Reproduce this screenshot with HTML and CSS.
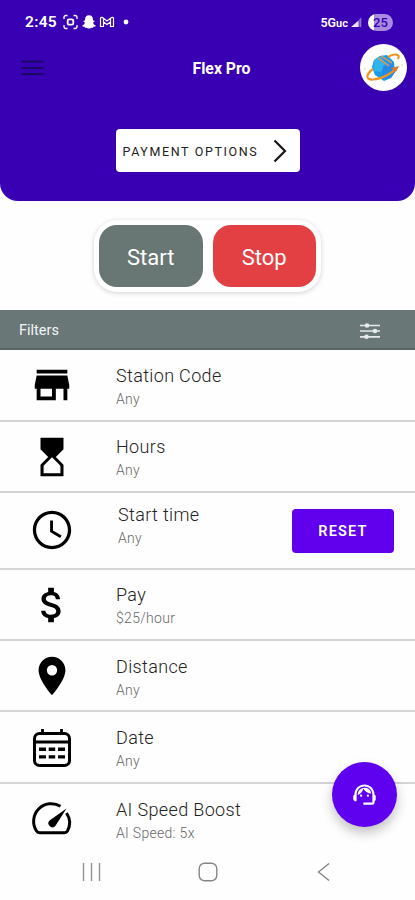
FILE: index.html
```html
<!DOCTYPE html>
<html lang="en">
<head>
<meta charset="utf-8">
<title>Flex Pro</title>
<link rel="stylesheet" href="styles.css">
</head>
<body>
<div class="app">
  <header class="header">
    <div class="status">
      <span class="time">2:45</span>
      <svg class="st-icons" width="68" height="16" viewBox="0 0 68 16">
        <g fill="none" stroke="#fff" stroke-width="1.3">
          <path d="M1 5V3.5Q1 1.5 3 1.5H4.500M10.500 1.500H12Q14 1.500 14 3.500V5M14 11V12.500Q14 14.500 12 14.500H10.500M4.500 14.500H3Q1 14.500 1 12.500V11"/>
          <rect x="4.700" y="5.300" width="5.600" height="5.400" rx="1.500" stroke-width="1.800"/>
        </g>
        <path fill="#fff" d="M26 1.300c-2.700 0-4 1.900-4 4.100v1.100l-1.600.3.200 1 1.400.7c-.4 1.500-1.500 2.500-2.700 3l.2.900 2 .4.500 1 1.700-.1c.8.600 1.400.9 2.300.9s1.500-.3 2.300-.9l1.700.1.500-1 2-.4.200-.9c-1.200-.5-2.300-1.500-2.700-3l1.400-.7.200-1-1.600-.3V5.400c0-2.200-1.300-4.100-4-4.100z"/>
        <path fill="none" stroke="#fff" stroke-width="1.200" d="M37.500 12.500V4.300Q38 2.800 39.500 3.600L44 7 48.500 3.600Q50 2.800 50.500 4.300V12.500H47.500V8L44 10.600 40.500 8V12.500ZM40.500 8V4.500M47.500 8V4.500"/>
        <circle cx="63" cy="8" r="2.400" fill="#fff"/>
      </svg>
      <span class="spacer"></span>
      <span class="network">5G<small>uc</small></span>
      <svg class="signal" width="11" height="11" viewBox="0 0 11 11"><path fill="#fff" fill-opacity=".9" d="M0 10 7.600 3.500V10z"/><path fill="#fff" fill-opacity=".45" d="M8.300 10V2.200L10.300.500V10z"/></svg>
      <span class="battery">25</span>
    </div>
    <div class="bar">
      <svg class="menu" width="22" height="16" viewBox="0 0 22 16"><path d="M0 1.500H21.500M0 8H21.500M0 14H21.500" stroke="#1d0764" stroke-width="2"/></svg>
      <h1>Flex Pro</h1>
      <div class="avatar">
        <svg width="47" height="47" viewBox="0 0 47 47">
          <path d="M14 16 20 12 27 11 34 18 35 28 31 34 24 37 15 31 12 23z" fill="#159be9"/>
          <path d="M14 16 20 12 26 20 21 28 13 27z" fill="#2fb4ee"/>
          <path d="M23 22 32 18 35 28 31 34 22 35z" fill="#2689e4"/>
          <path d="M18 14 29 22M21 12 32 19" fill="none" stroke="#c69a65" stroke-width="1.800"/>
          <path d="M28 13C34 9 41 10 38 15M13 25C6 30 5 36 13 35.500 22 35 32 29 37 24" fill="none" stroke="#ee941f" stroke-width="2.200"/>
          <path d="M31 24 39 22 36 28z" fill="#d87b2d"/>
          <circle cx="5" cy="25" r="1.300" fill="#f5edc9"/><circle cx="42" cy="21" r="1.200" fill="#f5edc9"/>
        </svg>
      </div>
    </div>
    <button class="payment"><span>PAYMENT OPTIONS</span><svg width="14" height="24" viewBox="0 0 14 24"><path d="M1.500 1.500 12 12 1.500 22.500" fill="none" stroke="#161616" stroke-width="2.200"/></svg></button>
  </header>

  <section class="controls">
    <div class="switch"><button class="start">Start</button><button class="stop">Stop</button></div>
  </section>

  <div class="filters"><span>Filters</span>
    <svg width="22" height="18" viewBox="0 0 22 18"><path d="M1 3.500H21M1 9H21M1 14.800H21" stroke="#e6eaea" stroke-width="1.700"/><g fill="#e6eaea"><circle cx="8" cy="3.500" r="2.300"/><circle cx="16" cy="9" r="2.300"/><circle cx="7.500" cy="14.800" r="2.300"/></g></svg>
  </div>

  <main class="list">
    <div class="row store">
      <svg class="icon" viewBox="0 0 24 24"><path d="M20 4H4v2h16V4zm1 10v-2l-1-5H4l-1 5v2h1v6h10v-6h4v6h2v-6h1zm-9 4H6v-4h6v4z"/></svg>
      <div class="text"><h2>Station Code</h2><p>Any</p></div>
    </div>
    <div class="row hours">
      <svg class="icon" viewBox="0 0 24 24"><path d="M18 22l-.01-6L14 12l3.990-4.010L18 2H6v6l4 4-4 3.990V22h12zM7.600 16.500l4.400-4.400 4.400 4.400V20.500H7.600v-4z"/></svg>
      <div class="text"><h2>Hours</h2><p>Any</p></div>
    </div>
    <div class="row clock">
      <svg class="icon" viewBox="0 0 24 24"><path d="M11.990 2C6.470 2 2 6.480 2 12s4.470 10 9.990 10C17.520 22 22 17.520 22 12S17.520 2 11.990 2zM12 20.300c-4.580 0-8.300-3.720-8.300-8.300s3.720-8.300 8.300-8.300 8.300 3.720 8.300 8.300-3.720 8.300-8.300 8.300zm.5-13.300H11v6l5.250 3.150.75-1.230-4.500-2.670z"/></svg>
      <div class="text"><h2>Start time</h2><p>Any</p></div>
      <button class="reset">RESET</button>
    </div>
    <div class="row pay">
      <svg class="icon" viewBox="0 0 24 24"><path d="M11.800 10.900c-2.270-.59-3-1.200-3-2.150 0-1.090 1.010-1.850 2.700-1.850 1.780 0 2.440.85 2.500 2.100h2.210c-.07-1.720-1.120-3.300-3.210-3.810V3h-3v2.160c-1.940.42-3.500 1.680-3.500 3.610 0 2.310 1.910 3.460 4.700 4.130 2.500.6 3 1.480 3 2.410 0 .69-.49 1.790-2.700 1.790-2.060 0-2.870-.92-2.980-2.100h-2.200c.12 2.190 1.760 3.420 3.680 3.830V21h3v-2.150c1.950-.37 3.500-1.500 3.500-3.550 0-2.840-2.430-3.810-4.700-4.400z"/></svg>
      <div class="text"><h2>Pay</h2><p>$25/hour</p></div>
    </div>
    <div class="row distance">
      <svg class="icon" viewBox="0 0 24 24"><path d="M12 2C8.130 2 5 5.130 5 9c0 5.250 7 13 7 13s7-7.750 7-13c0-3.870-3.130-7-7-7zm0 9.700a2.700 2.700 0 1 1 0-5.400 2.700 2.700 0 0 1 0 5.400z"/></svg>
      <div class="text"><h2>Distance</h2><p>Any</p></div>
    </div>
    <div class="row date">
      <svg class="icon" viewBox="0 0 46 46"><rect x="5.500" y="8.500" width="35" height="32" rx="5" fill="none" stroke="#000" stroke-width="3"/><path d="M5 17H41M13.500 4V10M32.500 4V10" fill="none" stroke="#000" stroke-width="2.800"/><path d="M10 22.500h7v3.500h-7zM19.700 22.500h6.500v3.500h-6.500zM29 22.500h7v3.500h-7zM10 30.200h7v3.300h-7zM19.700 30.200h6.500v3.300h-6.500zM29 30.200h7v3.300h-7z"/></svg>
      <div class="text"><h2>Date</h2><p>Any</p></div>
    </div>
    <div class="row boost">
      <svg class="icon" viewBox="0 0 46 46"><path d="M31.500 10.200A17.700 17.700 0 0 0 7.500 35Q8.500 36.700 10.500 36.700H35.500Q37.500 36.700 38.500 35A17.700 17.700 0 0 0 37.500 17" fill="none" stroke="#000" stroke-width="3"/><path d="M37.500 12.500 26.500 29.800A3.800 3.800 0 0 1 20.500 24.500Z"/></svg>
      <div class="text"><h2>AI Speed Boost</h2><p>AI Speed: 5x</p></div>
    </div>
  </main>

  <nav class="nav">
    <svg width="20" height="20" viewBox="0 0 20 20"><path d="M1.500 1V19M9.500 1V19M17.500 1V19" stroke="#929292" stroke-width="1.400"/></svg>
    <svg width="20" height="20" viewBox="0 0 20 20"><rect x="1.200" y="1.200" width="17.600" height="17.600" rx="5.500" fill="none" stroke="#858585" stroke-width="1.400"/></svg>
    <svg width="20" height="20" viewBox="0 0 20 20"><path d="M16 1.500 5.500 10 16 18.500" fill="none" stroke="#858585" stroke-width="1.400"/></svg>
  </nav>

  <button class="fab" aria-label="Support">
    <svg width="27" height="27" viewBox="0 0 24 24" fill="#fff"><path d="M21 12.220C21 6.730 16.740 3 12 3c-4.690 0-9 3.650-9 9.280-.6.340-1 .98-1 1.720v2c0 1.100.9 2 2 2h1v-6.100c0-3.870 3.130-7 7-7s7 3.130 7 7V19h-8v2h8c1.100 0 2-.9 2-2v-1.220c.59-.31 1-.92 1-1.640v-2.300c0-.7-.41-1.310-1-1.620z"/><circle cx="9" cy="13" r="1"/><circle cx="15" cy="13" r="1"/><path d="M18 11.030A6.040 6.040 0 0 0 12.050 6c-3.030 0-6.290 2.510-6.030 6.450a8.075 8.075 0 0 0 4.860-5.890c1.310 2.630 4 4.440 7.120 4.470z"/></svg>
  </button>
</div>
</body>
</html>
```
FILE: styles.css
```css
* { box-sizing: border-box; }
body { margin: 0; background: #fefefe; font-family: Roboto, "Liberation Sans", sans-serif; }
button { border: 0; padding: 0; font-family: inherit; }
svg { display: block; flex: none; }
h1, h2, p { margin: 0; font-weight: 400; }

.app { position: relative; width: 415px; height: 900px; overflow: hidden; display: flex; flex-direction: column; }

.header { height: 201px; flex: none; background: #3900b3; border-radius: 0 0 18px 18px; display: flex; flex-direction: column; align-items: center; }
.status { width: 100%; height: 44px; padding: 0 22px 0 25px; display: flex; align-items: center; color: #fff; }
.time { width: 38px; font-size: 15.500px; font-weight: 600; letter-spacing: .3px; }
.spacer { flex: 1; }
.network { font-size: 12.500px; font-weight: 600; margin-right: 3px; }
.network small { font-size: 11px; }
.signal { margin-right: 6px; }
.battery { width: 25px; height: 17px; border-radius: 9px; background: linear-gradient(90deg, #fff 0 25%, #a98be0 25%); color: #3900b3; font-size: 13px; line-height: 17px; text-align: center; font-weight: 500; }
.bar { width: 100%; height: 47px; padding: 0 8px 0 22px; display: grid; grid-template-columns: 47px 1fr 47px; align-items: center; }
.bar h1 { text-align: center; color: #fff; font-size: 15.800px; font-weight: 700; padding: 2px 0 0 14px; }
.avatar { width: 47px; height: 47px; border-radius: 50%; background: #fff; }
.payment { margin-top: 38px; width: 184px; height: 43px; border-radius: 4px; background: #fff; display: flex; align-items: center; justify-content: space-between; padding: 0 13px 0 7px; color: #222; font-size: 12.500px; letter-spacing: 1.620px; white-space: nowrap; }
.payment span { padding-top: 1px; }

.controls { height: 109px; flex: none; display: flex; justify-content: center; padding-top: 19px; }
.switch { width: 227px; height: 72px; border-radius: 23px; background: #fff; box-shadow: 0 1px 5px rgba(0, 0, 0, .18); display: flex; gap: 10px; padding: 5px; }
.switch button { flex: 1; height: 62px; border-radius: 18px; color: #fff; font-size: 22px; padding-top: 2px; }
.start { background: #687674; }
.stop { background: #e34043; }

.filters { height: 40px; flex: none; background: #6a7777; border-bottom: 2px solid #5a6665; color: #f4f5f5; display: flex; align-items: center; justify-content: space-between; padding: 3px 34px 0 19px; font-size: 14.500px; }

.list { height: 494px; flex: none; }
.row { display: flex; align-items: flex-start; height: 71px; border-bottom: 2px solid #d3d3d3; padding: 12px 21px 0 29px; }
.icon { width: 46px; height: 46px; }
.text { margin-left: 41px; flex: 1; }
.row h2 { font-size: 18px; line-height: 24px; letter-spacing: .35px; color: #222; font-weight: 300; margin-top: 2px; }
.row p { font-size: 14px; line-height: 20px; color: #686868; font-weight: 300; letter-spacing: .3px; margin-top: 1px; }
.store { height: 72px; }
.hours .text { margin-top: -1px; }
.clock { height: 77px; padding-top: 14px; }
.clock .text { margin: -6px 0 0 43px; }
.pay .text { margin-top: -1px; }
.date { height: 72px; padding-top: 13px; }
.date .text { margin-top: -1px; }
.boost { height: 60px; border-bottom: 0; }
.reset { width: 102px; height: 44px; margin-top: 2px; border-radius: 4px; background: #6100ec; color: #fff; font-size: 14.500px; font-weight: 600; letter-spacing: 1.200px; }

.nav { height: 56px; background: #fefefe; display: flex; justify-content: space-between; padding: 18px 82px 0; }
.fab { position: absolute; left: 332px; top: 762px; width: 65px; height: 65px; border-radius: 50%; background: #5f00ee; display: flex; align-items: center; justify-content: center; box-shadow: 0 6px 12px rgba(0, 0, 0, .24); }
```
